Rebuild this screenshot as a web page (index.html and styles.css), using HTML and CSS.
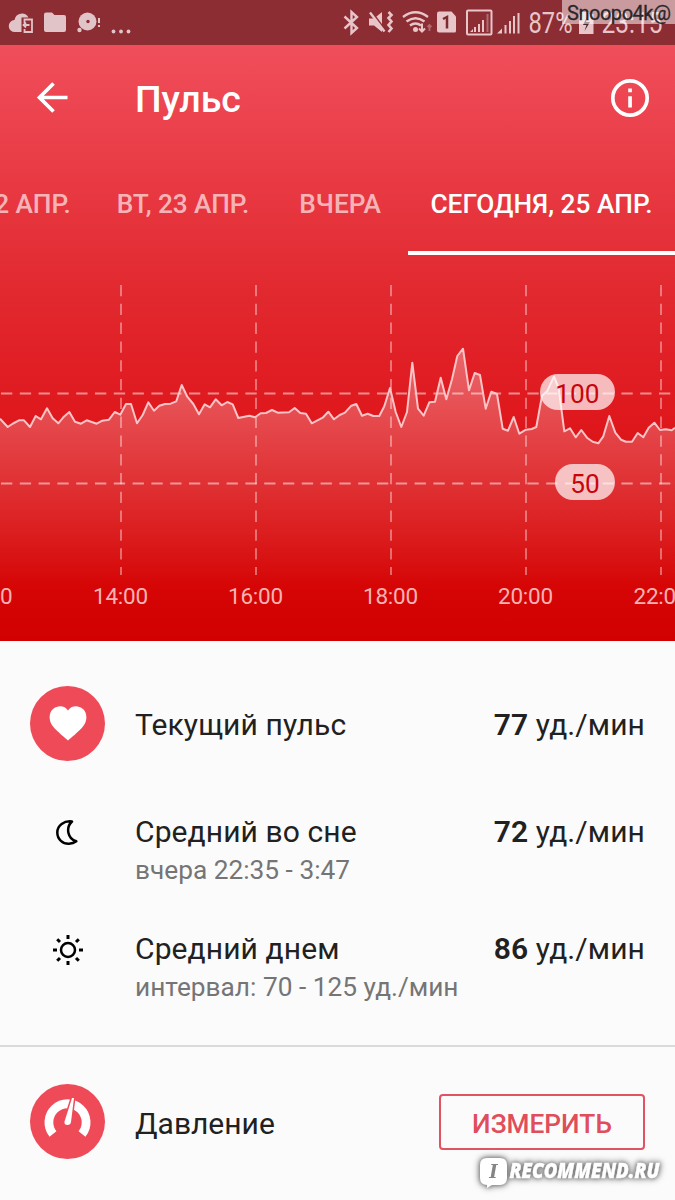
FILE: index.html
```html
<!DOCTYPE html>
<html lang="ru">

<head>
    <meta charset="UTF-8">
    <meta name="viewport" content="width=device-width, initial-scale=1.0">
    <title>Пульс</title>
    <link rel="stylesheet" href="styles.css">
</head>

<body>

    <div class="top">
        <div class="status-bar">
            <svg class="status-left" width="140" height="45" viewBox="0 0 140 45" fill="#e0c4c7">
                <path d="M15 32a6 6 0 0 1-.5-12A7.500 7.500 0 0 1 28.500 17.500H21.500v14.500z" />
                <path d="M24.500 23v-3.500h7.500v12.500h-7.500v-3M29.500 25h-6m2.500-2.500L23.500 25l2.500 2.500" fill="none" stroke="#e0c4c7" stroke-width="1.800" />
                <path d="M44 14.500q0-2 2-2h6l2.500 2.500H64q2 0 2 2V30q0 2-2 2H46q-2 0-2-2z" />
                <circle cx="87.500" cy="21.500" r="9" />
                <circle cx="88" cy="21.500" r="1.700" fill="#8c2c33" />
                <circle cx="79.500" cy="30" r="2.200" />
                <path d="M98 18h2v5h-2zM98 25h2v2h-2z" />
                <circle cx="113.500" cy="31.500" r="1.900" />
                <circle cx="121" cy="31.500" r="1.900" />
                <circle cx="128.500" cy="31.500" r="1.900" />
            </svg>
            <svg class="status-right" width="340" height="45" viewBox="335 0 340 45" fill="#e7c5c9">
                <!-- bluetooth -->
                <path d="M344.500 16.500l12.500 11.500-5.500 5V12l5.500 5-12.500 11.500" fill="none" stroke="#e7c5c9" stroke-width="2.400" />
                <!-- muted, vibrating -->
                <path d="M369 18.500h5l8-6.500v20l-8-6.500h-5z" />
                <path d="M371 11l15 20" fill="none" stroke="#8c2c33" stroke-width="2" />
                <path d="M370 12.500l14.500 19" fill="none" stroke="#e7c5c9" stroke-width="2.400" />
                <path d="M388.500 12l3 3-3 3 3 3.500-3 3.500 3 3.500-3 3.500" fill="none" stroke="#e7c5c9" stroke-width="2.600" />
                <!-- wifi -->
                <g fill="none" stroke="#e7c5c9" stroke-width="2.400">
                    <path d="M403 17q12.500-9.500 25 0M406.500 21.500q9-6.500 18 0M410 25.500q5.500-4 11 0" />
                    <path d="M422 23.500v8m-3-3l3 3 3-3" stroke-width="2" />
                    <path d="M429.500 31v-6m-2 2l2-2 2 2" stroke="#b06a72" stroke-width="1.800" />
                </g>
                <circle cx="415.500" cy="29.500" r="2.500" />
                <!-- sim card -->
                <path d="M439 11.500h12.500l4.500 5V31q0 1.500-1.500 1.500H439q-2 0-2-2v-17q0-2 2-2z" />
                <path d="M443 19l4-2v11.500" fill="none" stroke="#7d2b31" stroke-width="2.500" />
                <!-- signal -->
                <rect x="467" y="10.500" width="24.500" height="24" rx="1" fill="none" stroke="#e7c5c9" stroke-width="2" />
                <path d="M470 32l3-3v3zM474 27h2v5h-2zM478 24h2v8h-2zM482 20h2v12h-2z" />
                <path d="M486.500 14h2v18h-2z" fill="#ae6c74" />
                <path d="M497 33.500l5-5v5zM504.500 25h2v8.500h-2zM509 21h2v12.500h-2zM513 16h2v17.500h-2zM517.500 13h2v20.500h-2z" />
                <text class="status-text" x="528.500" y="33" textLength="44" lengthAdjust="spacingAndGlyphs">87%</text>
                <!-- battery -->
                <path d="M579 14h3v-2h7v2h4.500v20H579z" />
                <path d="M588 15l-5 10h3.500l-2 6 5.500-9h-4z" fill="#49282c" />
                <text class="status-text" x="601.500" y="33" textLength="61" lengthAdjust="spacingAndGlyphs">23:15</text>
                <rect x="562" y="0" width="113" height="24" fill="#fff" fill-opacity=".53" />
                <text class="nick" x="567" y="19.500" textLength="104">Snoopo4k@</text>
            </svg>
        </div>

        <header class="header">
            <svg width="34" height="34" viewBox="0 0 34 34" fill="none" stroke="#fff" stroke-width="3.700">
                <path d="M31.500 16.500H4M17.500 2.500L3.500 16.500l14 14" />
            </svg>
            <h1 class="title">Пульс</h1>
            <svg width="40" height="40" viewBox="0 0 40 40" fill="#fff">
                <circle cx="20" cy="20" r="17.200" fill="none" stroke="#fff" stroke-width="3.700" />
                <path d="M18.200 10.500h3.700v3.800h-3.700zM18.200 18.200h3.700v11.300h-3.700z" />
            </svg>
        </header>

        <nav class="tabs">
            <div class="tab date">ПН, 22 АПР.</div>
            <div class="tab date">ВТ, 23 АПР.</div>
            <div class="tab short">ВЧЕРА</div>
            <div class="tab active">СЕГОДНЯ, 25 АПР.</div>
        </nav>

        <svg class="chart" width="675" height="386" viewBox="0 255 675 386">
            <defs>
                <linearGradient id="area" gradientUnits="userSpaceOnUse" x1="0" y1="340" x2="0" y2="585">
                    <stop offset="0" stop-color="#fff" stop-opacity=".33" />
                    <stop offset=".4" stop-color="#fff" stop-opacity=".19" />
                    <stop offset=".8" stop-color="#fff" stop-opacity=".07" />
                    <stop offset="1" stop-color="#fff" stop-opacity="0" />
                </linearGradient>
            </defs>
            <path class="grid-line" d="M1 393.500H675M1 483.500H675" />
            <path class="grid-line vertical" d="M121 285V575M256 285V575M391 285V575M526 285V575M661 285V575" />
            <path fill="url(#area)" d="M0 418.700L7.700 427 13 423.500 19 420.300 24 420.300 30 427 35.700 416 41 419.300 47 408.300 52.700 418.300 58.300 423.300 63.300 417.300 69.300 412 75 421.700 81 423.700 86.700 420.300 96.700 423.700 102.300 420.700 109 419.700 114.700 412 120.300 414.700 126 404 131 404 137 423.300 142.700 415 148.300 402.300 154 410.700 159.300 405.700 165 404 170.700 403.700 176.300 401.300 181.700 385 187.300 396.700 193.300 404 199 414.300 204.700 404.300 210 407.300 215.700 399.300 221.700 405.300 227.300 402 232.700 404.300 238.300 418 249.300 415.700 255 417.300 260.700 413.300 266 413 272 410 277.700 412.700 289 412.300 294.700 408 300.300 413 306 413.700 311.700 423.300 322.700 417.700 328.300 411.700 334 419.300 339.700 415 345 412.700 351.300 405.700 356.300 404 362 415.700 367.700 413.700 373.300 416 379.300 416 384.300 406.300 390 388 395.700 412 401.300 427 407 412 412.300 362.700 418 408.700 423.700 415.700 429.300 402.300 435 401.700 440.700 377.700 446.300 399.300 452 379.300 457.300 356 463 348.700 469 390.300 474.700 373 480 375 485.700 408.700 491.300 391.700 497 394 502.700 428.700 508 430.700 513.700 417 519.300 433.700 526 429.700 531.700 429 536.300 427 542 395.700 547.300 391 554 376.300 558.700 388.300 564.300 431.300 570 428.300 575.700 437.300 581.300 430 587 437.700 592.700 441.700 598.300 443.300 603.300 436.300 609.300 416 615.300 432.700 621 439.700 626 441.700 632 441.700 637.700 433 643.300 437.300 648.700 427.700 654.300 422.700 660 430 665.700 429.300 671.700 430.300 675 427.700V585H0z" />
            <path class="pulse-line" d="M0 418.700L7.700 427 13 423.500 19 420.300 24 420.300 30 427 35.700 416 41 419.300 47 408.300 52.700 418.300 58.300 423.300 63.300 417.300 69.300 412 75 421.700 81 423.700 86.700 420.300 96.700 423.700 102.300 420.700 109 419.700 114.700 412 120.300 414.700 126 404 131 404 137 423.300 142.700 415 148.300 402.300 154 410.700 159.300 405.700 165 404 170.700 403.700 176.300 401.300 181.700 385 187.300 396.700 193.300 404 199 414.300 204.700 404.300 210 407.300 215.700 399.300 221.700 405.300 227.300 402 232.700 404.300 238.300 418 249.300 415.700 255 417.300 260.700 413.300 266 413 272 410 277.700 412.700 289 412.300 294.700 408 300.300 413 306 413.700 311.700 423.300 322.700 417.700 328.300 411.700 334 419.300 339.700 415 345 412.700 351.300 405.700 356.300 404 362 415.700 367.700 413.700 373.300 416 379.300 416 384.300 406.300 390 388 395.700 412 401.300 427 407 412 412.300 362.700 418 408.700 423.700 415.700 429.300 402.300 435 401.700 440.700 377.700 446.300 399.300 452 379.300 457.300 356 463 348.700 469 390.300 474.700 373 480 375 485.700 408.700 491.300 391.700 497 394 502.700 428.700 508 430.700 513.700 417 519.300 433.700 526 429.700 531.700 429 536.300 427 542 395.700 547.300 391 554 376.300 558.700 388.300 564.300 431.300 570 428.300 575.700 437.300 581.300 430 587 437.700 592.700 441.700 598.300 443.300 603.300 436.300 609.300 416 615.300 432.700 621 439.700 626 441.700 632 441.700 637.700 433 643.300 437.300 648.700 427.700 654.300 422.700 660 430 665.700 429.300 671.700 430.300 675 427.700" />

            <rect class="pill" x="540" y="374" width="75" height="36" rx="18" />
            <rect class="pill" x="555" y="464" width="60" height="36" rx="18" />
            <text class="pill-text" x="577.500" y="402.500">100</text>
            <text class="pill-text" x="585" y="492.500">50</text>

            <text class="hour" x="-15" y="604">12:00</text>
            <text class="hour" x="120.500" y="604">14:00</text>
            <text class="hour" x="255.500" y="604">16:00</text>
            <text class="hour" x="390.500" y="604">18:00</text>
            <text class="hour" x="525.500" y="604">20:00</text>
            <text class="hour" x="661" y="604">22:00</text>
        </svg>
    </div>

    <div class="stats">
        <div class="row current">
            <div class="icon round">
                <svg width="38" height="35" viewBox="0 0 38 35" fill="#fff">
                    <path d="M19 34.500C17 32.500 8 25.500 4 20.500C-1 14.500 0 6.500 4 3C9-1.300 16-.5 19 4.500C22-.5 29-1.300 34 3C38 6.500 39 14.500 34 20.500C30 25.500 21 32.500 19 34.500z" />
                </svg>
            </div>
            <div class="label">Текущий пульс</div>
            <div class="value"><b>77</b> уд./мин</div>
        </div>

        <div class="row">
            <div class="icon">
                <svg class="moon" width="22" height="26" viewBox="0 0 22 26" fill="none" stroke="#000" stroke-width="2.500" stroke-linejoin="round">
                    <path d="M16 2.500C8 1.500 1.300 6.500 1.300 13.500C1.300 20.500 7 25 13 24.700C16 24.700 18.500 23.700 20.300 22.300C11.500 20 9.500 8.500 16 2.500z" />
                </svg>
            </div>
            <div class="label">Средний во сне</div>
            <div class="value"><b>72</b> уд./мин</div>
            <div class="note">вчера 22:35 - 3:47</div>
        </div>

        <div class="row">
            <div class="icon">
                <svg class="sun" width="30" height="30" viewBox="0 0 30 30" fill="none" stroke="#000">
                    <circle cx="15" cy="15" r="7" stroke-width="2.500" />
                    <path stroke-width="3" d="M15 0v4M15 26v4M0 15h4M26 15h4M4.200 4.200l2.800 2.800M23 23l2.800 2.800M4.200 25.800L7 23M23 7l2.800-2.800" />
                </svg>
            </div>
            <div class="label">Средний днем</div>
            <div class="value"><b>86</b> уд./мин</div>
            <div class="note">интервал: 70 - 125 уд./мин</div>
        </div>
    </div>

    <div class="pressure">
        <div class="icon round">
            <svg width="75" height="75" viewBox="0 0 75 75">
                <path d="M23 50A18.600 18.600 0 1 1 52 50" fill="none" stroke="#fff" stroke-width="8.800" />
                <path class="needle" d="M42 14L34.500 37.500Q34 41 37.500 41Q40.500 41 41 38L44 14z" />
            </svg>
        </div>
        <div class="label">Давление</div>
        <button class="measure">ИЗМЕРИТЬ</button>
    </div>

    <svg class="watermark" width="200" height="50" viewBox="475 1150 200 50">
        <path d="M487 1158h13q7 0 7 7v13q0 7-7 7h-8l-5 3v-3q-7 0-7-7v-13q0-7 7-7z" fill="#fff" />
        <text class="serif-i" x="493.500" y="1178">I</text>
        <text class="brand" x="509.500" y="1178" textLength="150" lengthAdjust="spacingAndGlyphs">RECOMMEND.RU</text>
    </svg>

</body>

</html>
```
FILE: styles.css
```css
body {
    margin: 0;
    width: 675px;
    height: 1200px;
    overflow: hidden;
    position: relative;
    background-color: #fbfbfb;
    color: #212121;
    font-family: Roboto, "Liberation Sans", sans-serif;
}

svg {
    display: block;
}

.top {
    height: 641px;
    background: linear-gradient(#f04e5b 45px, #e22930 290px, #df191e 410px, #d90d0f 520px, #d60606 585px, #d20000);
}

.status-bar {
    height: 45px;
    display: flex;
    justify-content: space-between;
    background-color: #8c2c33;
}

.status-text {
    font-family: Roboto, sans-serif;
    font-size: 29px;
}

.nick {
    font-size: 20px;
    fill: #29272b;
    stroke: #29272b;
    stroke-width: .3;
}

.header {
    height: 105px;
    box-sizing: border-box;
    display: flex;
    align-items: center;
    padding: 0 25px 0 36px;
}

.title {
    flex: 1;
    margin: 0 0 0 65px;
    color: #fff;
    font-size: 37.5px;
    line-height: 44px;
    font-weight: 500;
    padding-top: 3px;
}

.tabs {
    height: 105px;
    display: flex;
    justify-content: flex-end;
    overflow: hidden;
}

.tab {
    flex: none;
    box-sizing: border-box;
    padding: 0 23px;
    font-size: 26.25px;
    font-weight: 500;
    line-height: 108px;
    color: rgba(255, 255, 255, 0.65);
    white-space: nowrap;
}

.tab.date {
    letter-spacing: -0.1px;
}

.tab.short {
    padding: 0 27px;
}

.tab.active {
    padding: 0 22.5px;
    color: #fff;
    border-bottom: 4px solid #fff;
}

.grid-line {
    fill: none;
    stroke: #fff;
    stroke-opacity: .5;
    stroke-width: 2;
    stroke-dasharray: 11.3 7.5;
}

.vertical {
    stroke-opacity: .42;
    stroke-width: 1.8;
}

.pulse-line {
    fill: none;
    stroke: #fbc4c7;
    stroke-width: 2;
    stroke-linejoin: round;
}

.pill {
    fill: #fff;
    fill-opacity: .7;
}

.pill-text {
    font-size: 26.25px;
    fill: #c9050c;
    text-anchor: middle;
}

.hour {
    font-size: 22.5px;
    letter-spacing: -0.2px;
    fill: #f8b3b3;
    text-anchor: middle;
}

.stats {
    padding: 45px 30px 39px;
    border-bottom: 2px solid #dadada;
}

.row {
    display: grid;
    grid-template-columns: 105px 1fr auto;
    grid-template-rows: 38px 38px;
    margin-top: 41px;
    font-size: 30px;
    line-height: 38px;
}

.row.current {
    grid-template-rows: 75px;
    line-height: 77px;
    margin: 0 0 52px;
}

.row.current + .row {
    margin-top: 0;
}

.icon {
    width: 75px;
    display: flex;
    align-items: center;
    justify-content: center;
}

.icon.round {
    height: 75px;
    border-radius: 50%;
    background-color: #ee4a58;
}

.moon {
    margin-right: 2px;
}

.sun {
    margin-top: 2px;
}

.label,
.value {
    letter-spacing: 0.1px;
}

.value b {
    font-weight: 600;
}

.note {
    grid-column: 2 / 4;
    font-size: 26.25px;
    color: #757575;
}

.pressure {
    display: flex;
    align-items: center;
    padding: 37px 30px 0;
    font-size: 30px;
}

.pressure .label {
    flex: 1;
    margin-left: 30px;
    padding-top: 3px;
    letter-spacing: 0;
}

.needle {
    fill: #fff;
    stroke: #ee4a58;
    stroke-width: 3;
    paint-order: stroke;
}

.measure {
    width: 206px;
    height: 56px;
    padding: 5px 0 0;
    background: none;
    border: 2px solid #e25361;
    border-radius: 4px;
    color: #e04d5b;
    font-family: inherit;
    font-size: 26.25px;
    font-weight: 500;
}

.watermark {
    position: absolute;
    left: 475px;
    top: 1150px;
    filter: drop-shadow(0 0 2px #777) drop-shadow(0 0 3px #888);
}

.serif-i {
    font-family: "DejaVu Serif", serif;
    font-size: 18px;
    font-style: italic;
    font-weight: bold;
    fill: #858585;
    text-anchor: middle;
}

.brand {
    font-family: "Open Sans", sans-serif;
    font-size: 20.5px;
    font-style: italic;
    font-weight: 800;
    fill: #fff;
    stroke: #fff;
    stroke-width: .4;
}
```
